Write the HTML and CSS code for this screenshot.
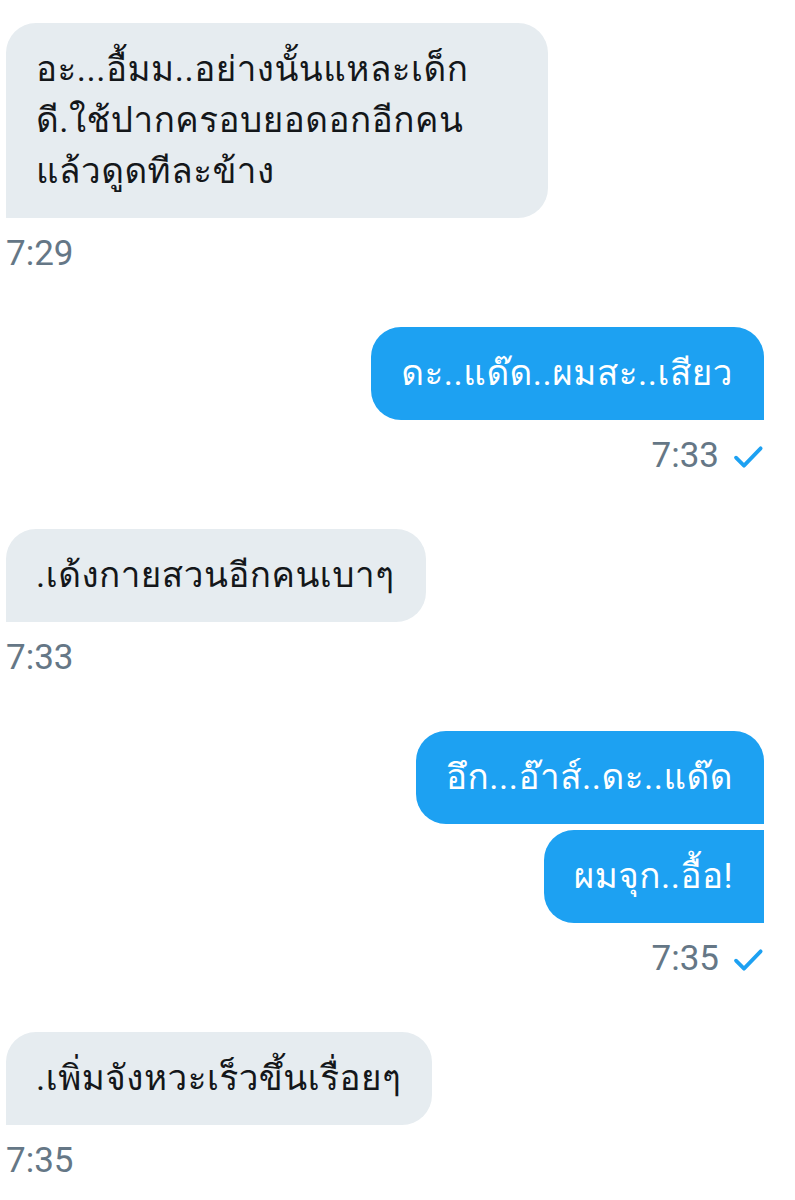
FILE: index.html
```html
<!DOCTYPE html>
<html lang="th">
<head>
  <meta charset="UTF-8" />
  <meta name="viewport" content="width=device-width, initial-scale=1.0"/>
  <title>Messages</title>
  <link rel="stylesheet" href="styles.css">
</head>
<body>
  <div class="chat">
    <div class="group in">
      <div class="bubble wide">อะ...อื้มม..อย่างนั้นแหละเด็ก<br>ดี.ใช้ปากครอบยอดอกอีกคน<br>แล้วดูดทีละข้าง</div>
      <div class="time">7:29</div>
    </div>

    <div class="group out">
      <div class="bubble">ดะ..แด๊ด..ผมสะ..เสียว</div>
      <div class="time">7:33 <svg class="check" viewBox="0 0 24 24"><path d="M3 12.5l6 6L21.5 5.5" /></svg></div>
    </div>

    <div class="group in">
      <div class="bubble">.เด้งกายสวนอีกคนเบาๆ</div>
      <div class="time">7:33</div>
    </div>

    <div class="group out">
      <div class="bubble first">อึก...อ๊าส์..ดะ..แด๊ด</div>
      <div class="bubble last">ผมจุก..อื้อ!</div>
      <div class="time">7:35 <svg class="check" viewBox="0 0 24 24"><path d="M3 12.5l6 6L21.5 5.5" /></svg></div>
    </div>

    <div class="group in">
      <div class="bubble">.เพิ่มจังหวะเร็วขึ้นเรื่อยๆ</div>
      <div class="time">7:35</div>
    </div>
  </div>
</body>
</html>
```

FILE: styles.css
```css
body {
  font-family: Roboto, "Noto Sans", sans-serif;
  background: #ffffff;
  margin: 0;
  padding: 0;
}
.chat {
  display: flex;
  flex-direction: column;
  gap: 53px;
  padding: 23px 31px 0 6px;
}
.group {
  display: flex;
  flex-direction: column;
  gap: 6px;
}
.group.in {
  align-items: flex-start;
}
.group.out {
  align-items: flex-end;
}
.bubble {
  font-family: Roboto, Loma, "Noto Sans Thai", sans-serif;
  font-size: 35px;
  letter-spacing: 0.5px;
  line-height: 51px;
  padding: 21px 31px 21px 30px;
  border-radius: 30px;
}
.bubble.wide {
  width: 481px;
}
.in .bubble {
  background: #e6ecf0;
  color: #14171a;
  border-bottom-left-radius: 0;
}
.out .bubble {
  background: #1da1f2;
  color: #ffffff;
  border-bottom-right-radius: 0;
}
.out .bubble.last {
  border-top-right-radius: 0;
}
.time {
  display: flex;
  align-items: center;
  gap: 13px;
  margin-top: 10px;
  font-size: 35px;
  line-height: 40px;
  color: #657786;
}
.check {
  width: 32px;
  height: 32px;
  margin-top: 2px;
  fill: none;
  stroke: #1da1f2;
  stroke-width: 2.8;
  stroke-linecap: round;
  stroke-linejoin: round;
}
```
